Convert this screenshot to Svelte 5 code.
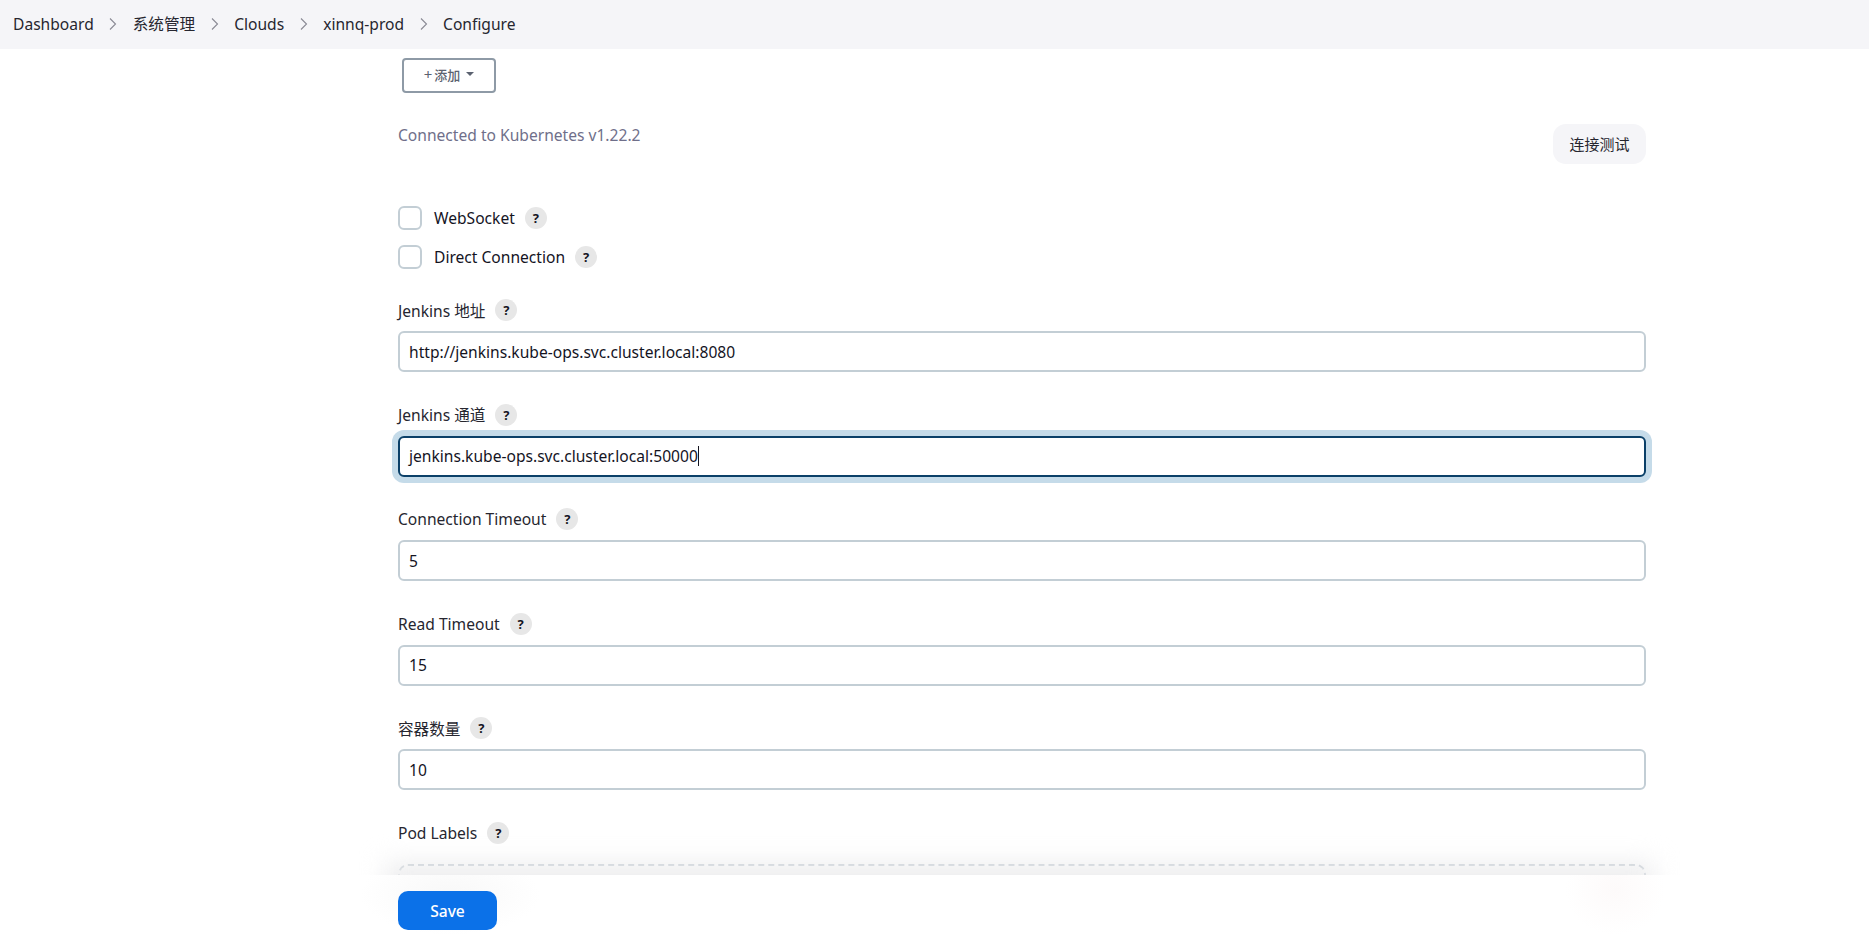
<script>
	const crumbs = ['Dashboard', '系统管理', 'Clouds', 'xinnq-prod', 'Configure'];

	const fields = [
		{ label: 'Jenkins 地址', value: 'http://jenkins.kube-ops.svc.cluster.local:8080' },
		{ label: 'Jenkins 通道', value: 'jenkins.kube-ops.svc.cluster.local:50000', focused: true },
		{ label: 'Connection Timeout', value: '5' },
		{ label: 'Read Timeout', value: '15' },
		{ label: '容器数量', value: '10' }
	];
</script>

<header class="topbar">
	{#each crumbs as crumb, i}
		{#if i > 0}
			<span class="sep">
				<svg width="8" height="14" viewBox="0 0 8 14" fill="none">
					<path d="M1 1.5 6.5 7 1 12.5" stroke="#8a8a94" stroke-width="1.1" />
				</svg>
			</span>
		{/if}
		<span class="crumb">{crumb}</span>
	{/each}
</header>

<main class="form">
	<button class="add">
		<span class="plus">+</span>添加
		<span class="caret-down"></span>
	</button>

	<div class="connection">
		<span class="status">Connected to Kubernetes v1.22.2</span>
		<button class="test">连接测试</button>
	</div>

	<div class="checks">
		<div class="check">
			<span class="box"></span>
			<span class="check-label">WebSocket</span>
			<span class="help">?</span>
		</div>
		<div class="check">
			<span class="box"></span>
			<span class="check-label">Direct Connection</span>
			<span class="help">?</span>
		</div>
	</div>

	{#each fields as field}
		<div class="field">
			<div class="field-label">{field.label}<span class="help">?</span></div>
			<div class="input" class:focused={field.focused}>
				{field.value}{#if field.focused}<span class="cursor"></span>{/if}
			</div>
		</div>
	{/each}

	<div class="field">
		<div class="field-label">Pod Labels<span class="help">?</span></div>
		<div class="dashed"></div>
	</div>
</main>

<footer class="bottom">
	<div class="shade"></div>
	<button class="save">Save</button>
</footer>

<style>
	:global(body) {
		background: #fff;
		color: #14141f;
		font-family: "Noto Sans", "Noto Sans CJK SC", sans-serif;
		font-size: 15.6px;
		height: 938px;
		overflow: hidden;
	}

	.topbar {
		display: flex;
		align-items: center;
		height: 47px;
		padding: 0 0 2px 13px;
		background: #f5f5f8;
	}

	.crumb {
		line-height: 20px;
		color: #26262f;
	}

	.sep {
		display: flex;
		justify-content: center;
		width: 39px;
	}

	.form {
		padding: 9px 223px 0 398px;
	}

	.add {
		display: flex;
		align-items: center;
		justify-content: center;
		margin-left: 4px;
		width: 94px;
		height: 35px;
		padding: 0 0 3px;
		border: 2px solid #8e9aa6;
		border-radius: 4px;
		background: #fff;
		color: #5b6270;
		font: inherit;
		font-size: 13px;
		font-weight: 500;
	}

	.plus {
		margin-right: 2px;
		font-size: 15px;
		font-weight: 400;
	}

	.caret-down {
		margin-left: 6px;
		border-left: 4px solid transparent;
		border-right: 4px solid transparent;
		border-top: 4px solid #5b6270;
	}

	.connection {
		display: flex;
		justify-content: space-between;
		margin-top: 31px;
	}

	.status {
		line-height: 22px;
		color: #6f6f8a;
	}

	.test {
		width: 93px;
		height: 40px;
		padding: 0 0 2px;
		border: none;
		border-radius: 13px;
		background: #f5f5f8;
		color: #26262f;
		font: inherit;
		font-size: 15px;
	}

	.checks {
		display: flex;
		flex-direction: column;
		gap: 15px;
		margin-top: 42px;
	}

	.check {
		display: flex;
		align-items: center;
		height: 24px;
	}

	.box {
		box-sizing: border-box;
		width: 24px;
		height: 24px;
		border: 2px solid #c3ced5;
		border-radius: 6px;
		background: #fff;
	}

	.check-label {
		margin-left: 12px;
	}

	.help {
		display: inline-flex;
		align-items: center;
		justify-content: center;
		width: 22px;
		height: 22px;
		margin-left: 10px;
		border-radius: 50%;
		background: #e7e7e7;
		color: #14141f;
		font-size: 13px;
		font-weight: 700;
	}

	.field {
		margin-top: 31.5px;
	}

	.checks + .field {
		margin-top: 30px;
	}

	.field-label {
		display: flex;
		align-items: center;
		height: 22px;
		margin-bottom: 10px;
		color: #26262f;
	}

	.input {
		box-sizing: border-box;
		height: 41px;
		padding: 0 9px;
		border: 2px solid #c3ced5;
		border-radius: 6px;
		background: #fff;
		display: flex;
		align-items: center;
	}

	.input.focused {
		border-color: #0b4068;
		box-shadow: 0 0 0 6px #c5dbe9;
	}

	.cursor {
		width: 1px;
		height: 20px;
		background: #14141f;
	}

	.dashed {
		box-sizing: border-box;
		height: 80px;
		margin-top: 20px;
		border: 2px dashed #b8c2ca;
		border-radius: 10px;
	}

	.bottom {
		position: fixed;
		left: 0;
		right: 0;
		bottom: 0;
		height: 63px;
		background:
			radial-gradient(ellipse 90px 40px at 450px 20px, #f8f8f8, rgba(248, 248, 248, 0)),
			radial-gradient(ellipse 50px 45px at 1615px 15px, #fdfafa, rgba(253, 250, 250, 0)),
			#fff;
	}

	.shade {
		position: absolute;
		left: 340px;
		right: 170px;
		bottom: 100%;
		height: 45px;
		overflow: hidden;
		pointer-events: none;
	}

	.shade::before {
		content: "";
		position: absolute;
		left: 45px;
		right: 45px;
		top: 32px;
		height: 40px;
		background: #eeeeef;
		filter: blur(12px);
	}

	.save {
		position: absolute;
		left: 398px;
		top: 16px;
		width: 99px;
		height: 39px;
		border: none;
		border-radius: 10px;
		background: #0b71e8;
		color: #fff;
		font: inherit;
		font-weight: 500;
	}
</style>
